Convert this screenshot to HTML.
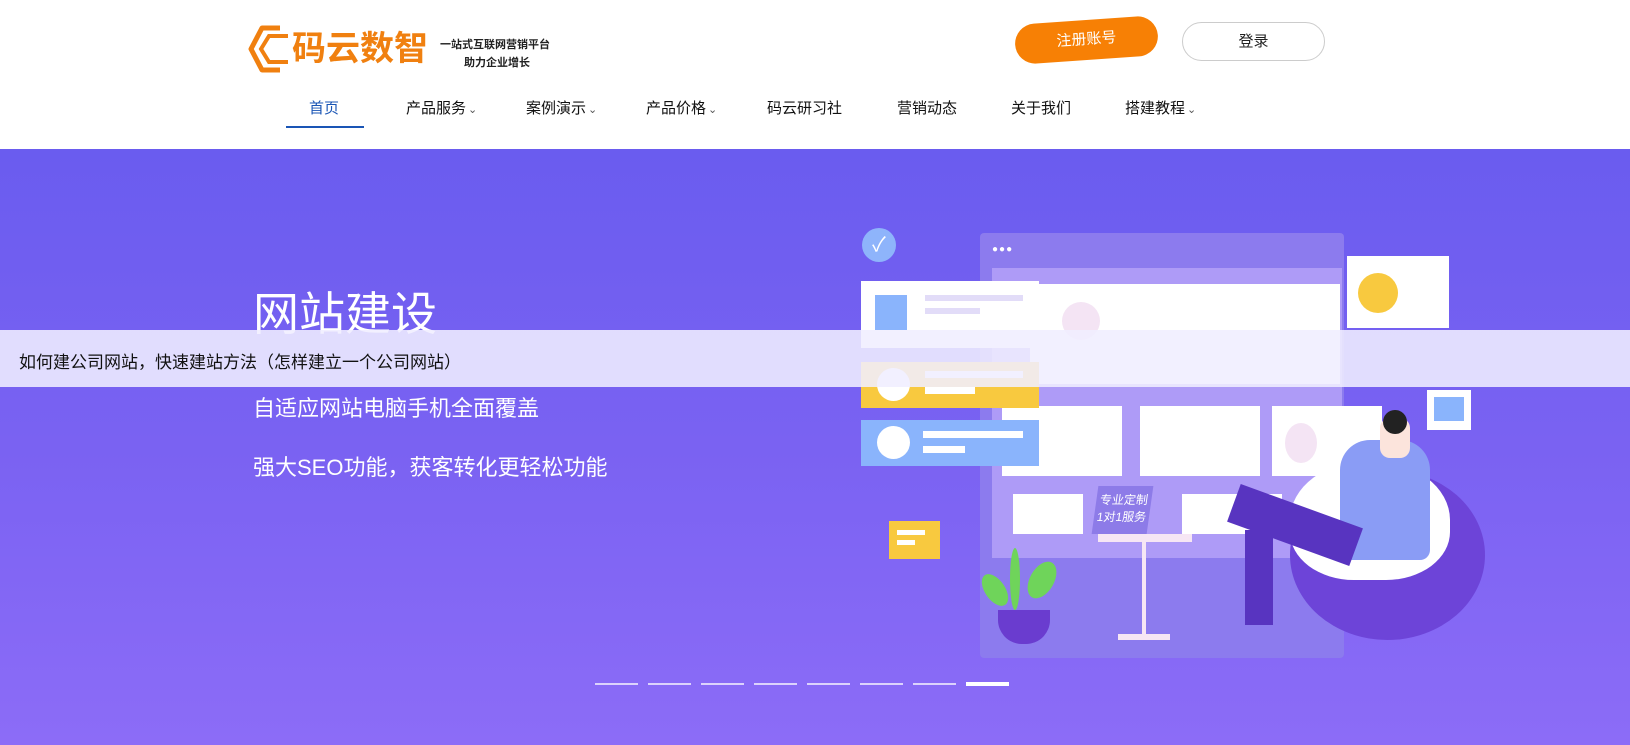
<!DOCTYPE html>
<html><head><meta charset="utf-8"><style>
*{margin:0;padding:0;box-sizing:border-box}
body{width:1630px;height:745px;overflow:hidden;font-family:"Liberation Sans","Noto Sans CJK SC",sans-serif;background:#fff;position:relative}
.a{position:absolute}
.nav span{position:absolute;top:97px;font-size:15px;color:#111}
.nav i{font-style:normal;font-size:11px;color:#555;margin-left:2px}
.banner{top:149px;left:0;width:1630px;height:596px;background:linear-gradient(180deg,#6a5cef 0%,#7a62f2 50%,#8c6cf7 100%)}
.w{background:#fff}
.dot{position:absolute;top:683px;width:43px;height:2px;background:rgba(255,255,255,.7)}
</style></head><body>
<!-- logo -->
<svg class="a" style="left:248px;top:24px" width="44" height="50" viewBox="0 0 44 50"><path d="M32 4 L14 4 L3 25 L14 46 L32 46" fill="none" stroke="#f08010" stroke-width="5" stroke-linejoin="round"/><path d="M40 12 L21 12 L13 25 L21 38 L40 38" fill="none" stroke="#f08010" stroke-width="4"/></svg>
<div class="a" style="left:292px;top:27px;font-size:34px;font-weight:bold;color:#f08010;line-height:44px;white-space:nowrap">码云数智</div>
<div class="a" style="left:440px;top:36px;font-size:11px;font-weight:bold;color:#222">一站式互联网营销平台</div>
<div class="a" style="left:464px;top:54px;font-size:11px;font-weight:bold;color:#222">助力企业增长</div>
<div class="a" style="left:1015px;top:20px;width:143px;height:40px;border-radius:20px;background:#f78005;transform:rotate(-4deg);color:#fff;font-size:15px;text-align:center;line-height:40px">注册账号</div>
<div class="a" style="left:1182px;top:22px;width:143px;height:39px;border-radius:20px;border:1px solid #ccc;color:#222;font-size:15px;text-align:center;line-height:37px">登录</div>
<div class="nav">
<span style="left:309px;color:#1a55b5">首页</span>
<span style="left:406px">产品服务<i>⌄</i></span>
<span style="left:526px">案例演示<i>⌄</i></span>
<span style="left:646px">产品价格<i>⌄</i></span>
<span style="left:767px">码云研习社</span>
<span style="left:897px">营销动态</span>
<span style="left:1011px">关于我们</span>
<span style="left:1125px">搭建教程<i>⌄</i></span>
</div>
<div class="a" style="left:286px;top:126px;width:78px;height:2px;background:#1a55b5"></div>
<div class="a banner"></div>
<!-- illustration -->
<div class="a" style="left:980px;top:233px;width:364px;height:425px;background:#8c7bee;border-radius:4px"></div>
<div class="a" style="left:992px;top:244px;color:#fff;font-size:10px;letter-spacing:1px">●●●</div>
<div class="a" style="left:992px;top:268px;width:350px;height:290px;background:#ae9bf7"></div>
<div class="a w" style="left:1030px;top:284px;width:310px;height:100px"></div>
<div class="a" style="left:1062px;top:302px;width:38px;height:38px;border-radius:50%;background:#f4e4f4"></div>
<div class="a w" style="left:1002px;top:406px;width:120px;height:70px"></div>
<div class="a w" style="left:1140px;top:406px;width:120px;height:70px"></div>
<div class="a w" style="left:1272px;top:406px;width:110px;height:70px"></div>
<div class="a" style="left:1285px;top:423px;width:32px;height:40px;border-radius:50%;background:#f4e4f4"></div>
<div class="a w" style="left:1013px;top:494px;width:70px;height:40px"></div>
<div class="a w" style="left:1182px;top:494px;width:100px;height:40px"></div>
<div class="a" style="left:1095px;top:486px;width:55px;height:48px;background:#8d7be8;transform:skewX(-8deg);color:#fff;font-size:12px;text-align:center;line-height:17px;padding-top:6px">专业定制<br>1对1服务</div>
<div class="a" style="left:1098px;top:534px;width:94px;height:8px;background:#f6e6f4"></div>
<div class="a" style="left:1142px;top:542px;width:4px;height:94px;background:#f6e6f4"></div>
<div class="a" style="left:1118px;top:634px;width:52px;height:6px;background:#f6e6f4"></div>
<div class="a" style="left:862px;top:228px;width:34px;height:34px;border-radius:50%;background:#8eb4fb;color:#fff;font-size:20px;text-align:center;line-height:34px">✓</div>
<div class="a w" style="left:861px;top:281px;width:178px;height:67px"></div>
<div class="a" style="left:875px;top:295px;width:32px;height:35px;background:#8ab4fc"></div>
<div class="a" style="left:925px;top:295px;width:98px;height:6px;background:#e2dcf8"></div>
<div class="a" style="left:925px;top:308px;width:55px;height:6px;background:#e2dcf8"></div>
<div class="a" style="left:861px;top:362px;width:178px;height:46px;background:#f8c93f"></div>
<div class="a" style="left:877px;top:368px;width:33px;height:33px;border-radius:50%;background:#fff"></div>
<div class="a w" style="left:925px;top:371px;width:98px;height:7px"></div>
<div class="a w" style="left:925px;top:387px;width:50px;height:7px"></div>
<div class="a" style="left:861px;top:420px;width:178px;height:46px;background:#8ab4fc"></div>
<div class="a" style="left:877px;top:426px;width:33px;height:33px;border-radius:50%;background:#fff"></div>
<div class="a w" style="left:923px;top:431px;width:100px;height:7px"></div>
<div class="a w" style="left:923px;top:446px;width:42px;height:7px"></div>
<div class="a" style="left:889px;top:521px;width:51px;height:38px;background:#f8c93f"></div>
<div class="a w" style="left:897px;top:530px;width:28px;height:5px"></div>
<div class="a w" style="left:897px;top:540px;width:18px;height:5px"></div>
<div class="a w" style="left:1347px;top:256px;width:102px;height:72px"></div>
<div class="a" style="left:1358px;top:273px;width:40px;height:40px;border-radius:50%;background:#f8c93f"></div>
<div class="a w" style="left:1427px;top:390px;width:44px;height:40px"></div>
<div class="a" style="left:1434px;top:397px;width:30px;height:24px;background:#8ab4fc"></div>
<div class="a" style="left:1290px;top:470px;width:195px;height:170px;border-radius:50%;background:#6d44d8"></div>
<div class="a" style="left:1290px;top:460px;width:160px;height:120px;border-radius:50% 50% 40% 40%;background:#fff"></div>
<div class="a" style="left:1340px;top:440px;width:90px;height:120px;background:#8a9cf5;border-radius:30px 30px 10px 10px"></div>
<div class="a" style="left:1380px;top:418px;width:30px;height:40px;background:#fce4dc;border-radius:10px"></div>
<div class="a" style="left:1383px;top:410px;width:24px;height:24px;border-radius:50%;background:#222"></div>
<div class="a" style="left:1230px;top:505px;width:130px;height:40px;background:#5834c0;transform:rotate(20deg)"></div>
<div class="a" style="left:1245px;top:530px;width:28px;height:95px;background:#5834c0"></div>
<div class="a" style="left:998px;top:610px;width:52px;height:34px;border-radius:0 0 24px 24px;background:#6a3ccf"></div>
<div class="a" style="left:1010px;top:548px;width:10px;height:62px;background:#6fd45a;border-radius:50%"></div>
<div class="a" style="left:1030px;top:560px;width:24px;height:40px;background:#6fd45a;border-radius:50%;transform:rotate(30deg)"></div>
<div class="a" style="left:985px;top:572px;width:20px;height:36px;background:#6fd45a;border-radius:50%;transform:rotate(-35deg)"></div>
<!-- text -->
<div class="a" style="left:253px;top:286px;font-size:46px;color:#fff;line-height:56px">网站建设</div>
<div class="a" style="left:0;top:330px;width:1630px;height:57px;background:rgba(240,238,255,.88)"></div>
<div class="a" style="left:19px;top:348px;font-size:17px;color:#111">如何建公司网站，快速建站方法（怎样建立一个公司网站）</div>
<div class="a" style="left:253px;top:391px;font-size:22px;color:#fff">自适应网站电脑手机全面覆盖</div>
<div class="a" style="left:253px;top:450px;font-size:22px;color:#fff">强大SEO功能，获客转化更轻松功能</div>
<div class="dot" style="left:595px"></div><div class="dot" style="left:648px"></div><div class="dot" style="left:701px"></div><div class="dot" style="left:754px"></div><div class="dot" style="left:807px"></div><div class="dot" style="left:860px"></div><div class="dot" style="left:913px"></div><div class="dot" style="left:966px;height:4px;top:682px;background:#fff"></div>
</body></html>
